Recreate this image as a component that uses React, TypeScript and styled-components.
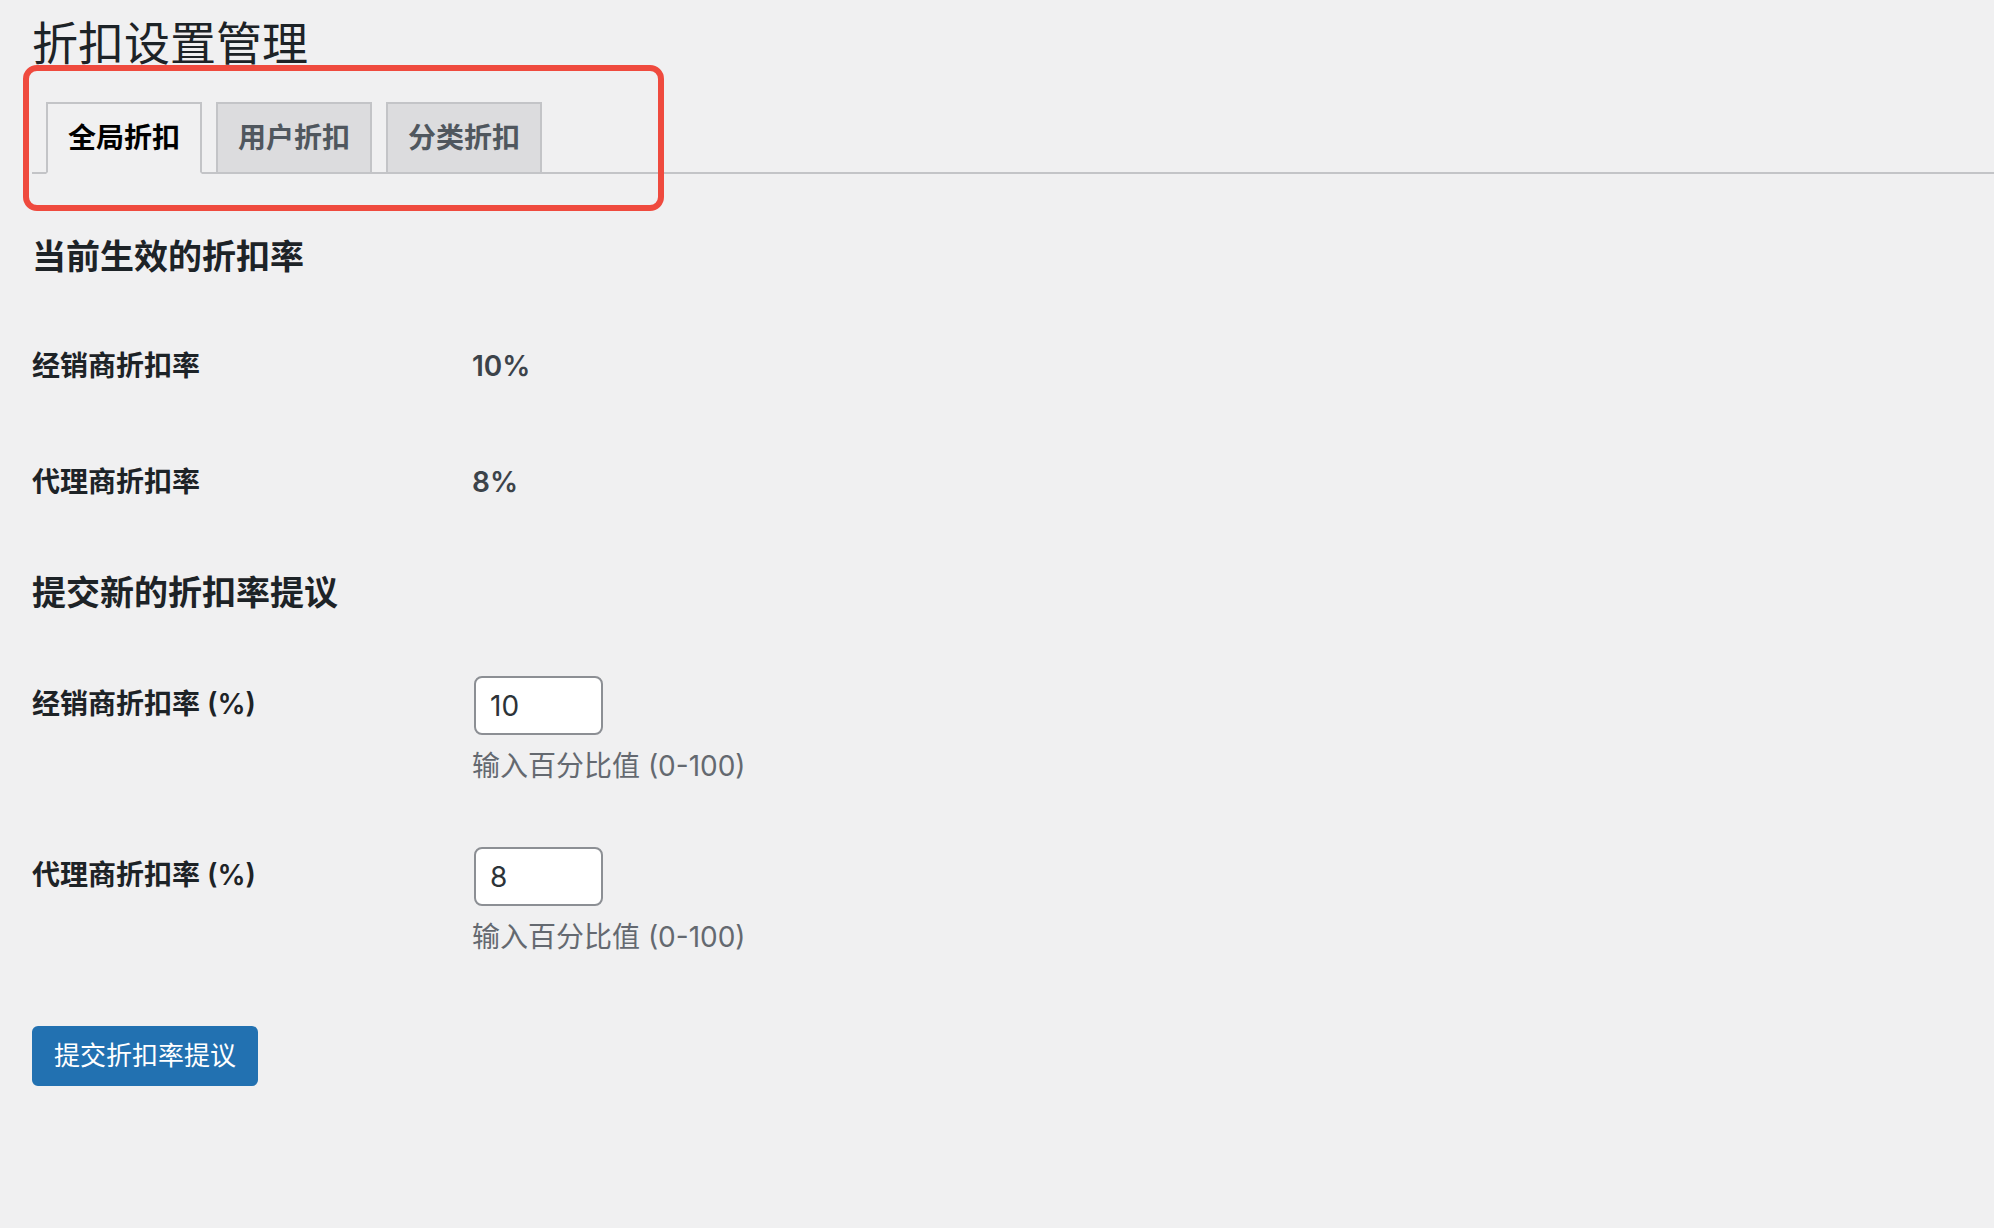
import styled, { createGlobalStyle } from 'styled-components';

const GlobalStyle = createGlobalStyle`
  html, body {
    margin: 0;
    padding: 0;
    background: #f0f0f1;
  }
  body {
    font-family: Inter, "Noto Sans CJK SC", sans-serif;
    color: #3c434a;
    min-height: 1228px;
  }
`;

const Page = styled.div`
  position: relative;
  padding: 0 0 0 32px;
  min-height: 1228px;
  box-sizing: border-box;
`;

const Title = styled.h1`
  font-size: 46px;
  font-weight: 400;
  line-height: 60px;
  color: #1d2327;
  margin: 0;
  padding-top: 13px;
`;

const TabWrapper = styled.nav`
  display: flex;
  margin-top: 29px;
  border-bottom: 2px solid #c3c4c7;
`;

const Tab = styled.a<{ $active?: boolean }>`
  display: block;
  margin: 0 0 -2px 14px;
  padding: 10px 20px;
  font-size: 28px;
  line-height: 48px;
  font-weight: 600;
  text-decoration: none;
  border: 2px solid #c3c4c7;
  border-bottom-color: ${(p) => (p.$active ? '#f0f0f1' : '#c3c4c7')};
  background: ${(p) => (p.$active ? '#f0f0f1' : '#dcdcde')};
  color: ${(p) => (p.$active ? '#000' : '#50575e')};
  cursor: pointer;
`;

const Annotation = styled.div`
  position: absolute;
  left: 23px;
  top: 65px;
  width: 641px;
  height: 146px;
  box-sizing: border-box;
  border: 6px solid #ef4a3e;
  border-radius: 14px;
  pointer-events: none;
`;

const SectionTitle = styled.h2<{ $gap: number }>`
  font-size: 34px;
  font-weight: 600;
  line-height: 44px;
  color: #1d2327;
  margin: ${(p) => p.$gap}px 0 0;
`;

const FormTable = styled.div<{ $gap: number }>`
  margin-top: ${(p) => p.$gap}px;
`;

const Row = styled.div<{ $form?: boolean }>`
  display: grid;
  grid-template-columns: 440px 1fr;
  align-items: ${(p) => (p.$form ? 'start' : 'center')};
`;

const Label = styled.div`
  padding: 40px 0;
  font-size: 28px;
  line-height: 36px;
  font-weight: 600;
  color: #1d2327;
`;

const Value = styled.div`
  font-size: 28px;
  line-height: 36px;
  font-weight: 600;
  color: #3c434a;
`;

const Field = styled.div`
  padding: 30px 0;
`;

const NumberInput = styled.input`
  display: block;
  width: 129px;
  height: 59px;
  margin-left: 2px;
  box-sizing: border-box;
  padding: 0 14px;
  border: 2px solid #8c8f94;
  border-radius: 8px;
  background: #fff;
  font-family: Inter, "Noto Sans CJK SC", sans-serif;
  font-size: 28px;
  color: #2c3338;
  outline: none;
`;

const Description = styled.p`
  margin: 10px 0 0;
  font-size: 28px;
  line-height: 42px;
  color: #646970;
`;

const SubmitButton = styled.button`
  margin-top: 38px;
  height: 60px;
  padding: 0 20px;
  border: 2px solid #2271b1;
  border-radius: 6px;
  background: #2271b1;
  color: #fff;
  font-family: Inter, "Noto Sans CJK SC", sans-serif;
  font-size: 26px;
  line-height: 56px;
  cursor: pointer;
`;

const tabs = ['全局折扣', '用户折扣', '分类折扣'];

const current = [
  { label: '经销商折扣率', value: '10%' },
  { label: '代理商折扣率', value: '8%' },
];

const proposals = [
  { label: '经销商折扣率 (%)', value: '10' },
  { label: '代理商折扣率 (%)', value: '8' },
];

export default function App() {
  return (
    <Page>
      <GlobalStyle />
      <Title>折扣设置管理</Title>
      <TabWrapper>
        {tabs.map((t, i) => (
          <Tab key={t} $active={i === 0}>
            {t}
          </Tab>
        ))}
      </TabWrapper>
      <Annotation />

      <SectionTitle $gap={61}>当前生效的折扣率</SectionTitle>
      <FormTable $gap={29}>
        {current.map((r) => (
          <Row key={r.label}>
            <Label>{r.label}</Label>
            <Value>{r.value}</Value>
          </Row>
        ))}
      </FormTable>

      <SectionTitle $gap={31}>提交新的折扣率提议</SectionTitle>
      <FormTable $gap={31}>
        {proposals.map((r) => (
          <Row key={r.label} $form>
            <Label>{r.label}</Label>
            <Field>
              <NumberInput type="number" defaultValue={r.value} />
              <Description>输入百分比值 (0-100)</Description>
            </Field>
          </Row>
        ))}
      </FormTable>

      <SubmitButton type="button">提交折扣率提议</SubmitButton>
    </Page>
  );
}
